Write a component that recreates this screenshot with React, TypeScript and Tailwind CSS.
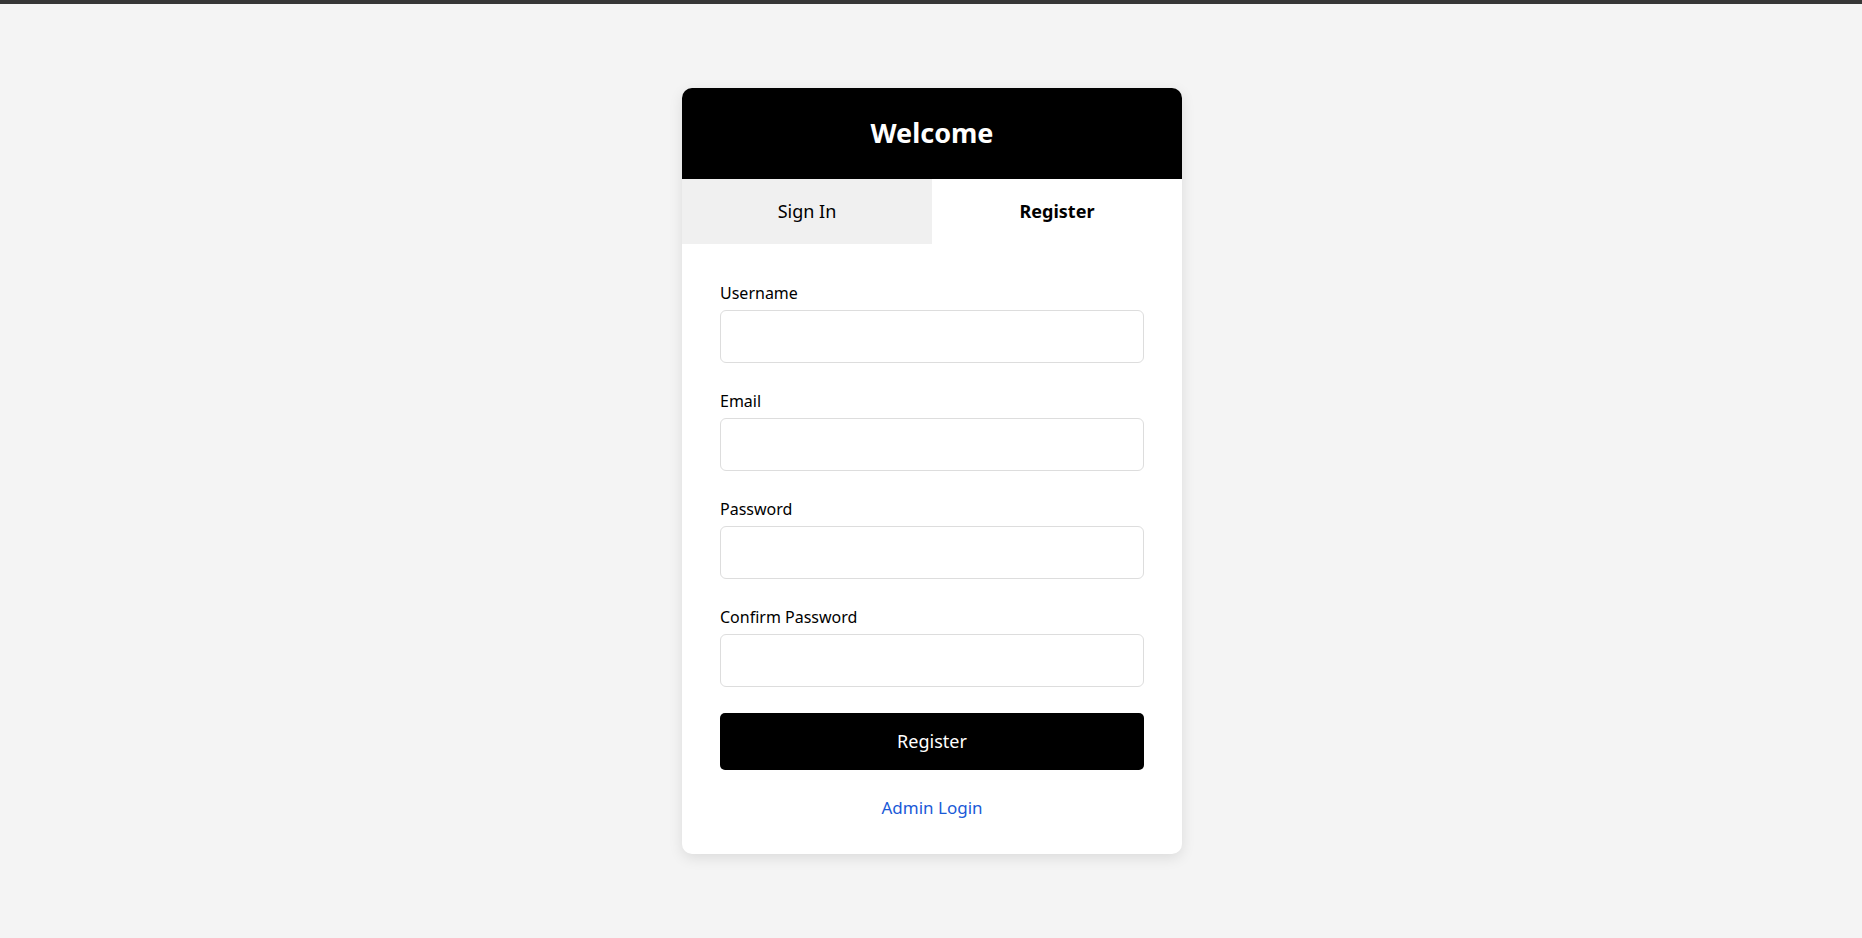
import { useState } from "react";

const fields = [
  { label: "Username", type: "text" },
  { label: "Email", type: "email" },
  { label: "Password", type: "password" },
  { label: "Confirm Password", type: "password" },
];

const App = () => {
  const [tab, setTab] = useState("register");

  return (
    <div
      className="min-h-screen bg-[#f4f4f4] text-black"
      style={{ fontFamily: '"Segoe UI", "Noto Sans", "Open Sans", sans-serif' }}
    >
      <div className="h-[4px] bg-[#363636]" />
      <div className="flex justify-center pt-[84px] pl-[2px]">
        <div className="w-[500px] bg-white rounded-[10px] shadow-[0_4px_14px_rgba(0,0,0,0.1)] overflow-hidden">
          <div className="h-[91px] bg-black flex items-center justify-center">
            <h2 className="text-white font-bold text-[27px]">Welcome</h2>
          </div>
          <div className="flex h-[65px]">
            <button
              className={`flex-1 text-[18px] ${tab === "signin" ? "bg-white font-bold" : "bg-[#f0f0f0]"}`}
              onClick={() => setTab("signin")}
            >
              Sign In
            </button>
            <button
              className={`flex-1 text-[18px] ${tab === "register" ? "bg-white font-bold" : "bg-[#f0f0f0]"}`}
              onClick={() => setTab("register")}
            >
              Register
            </button>
          </div>
          <form className="px-[38px] pt-[37px] pb-[34px]" onSubmit={(e) => e.preventDefault()}>
            {fields.map((f) => (
              <div key={f.label} className="mb-[26px]">
                <label className="block h-[24px] leading-[24px] text-[16px] mb-[5px]">{f.label}</label>
                <input
                  type={f.type}
                  className="w-full h-[53px] border border-[#dddddd] rounded-[6px] px-3 outline-none"
                />
              </div>
            ))}
            <button className="w-full h-[57px] bg-black text-white text-[18px] rounded-[5px]">
              Register
            </button>
            <div className="text-center mt-[26px] leading-[24px]">
              <a href="#" className="text-[#1a5ad7] text-[17px]">
                Admin Login
              </a>
            </div>
          </form>
        </div>
      </div>
    </div>
  );
};

export default App;
